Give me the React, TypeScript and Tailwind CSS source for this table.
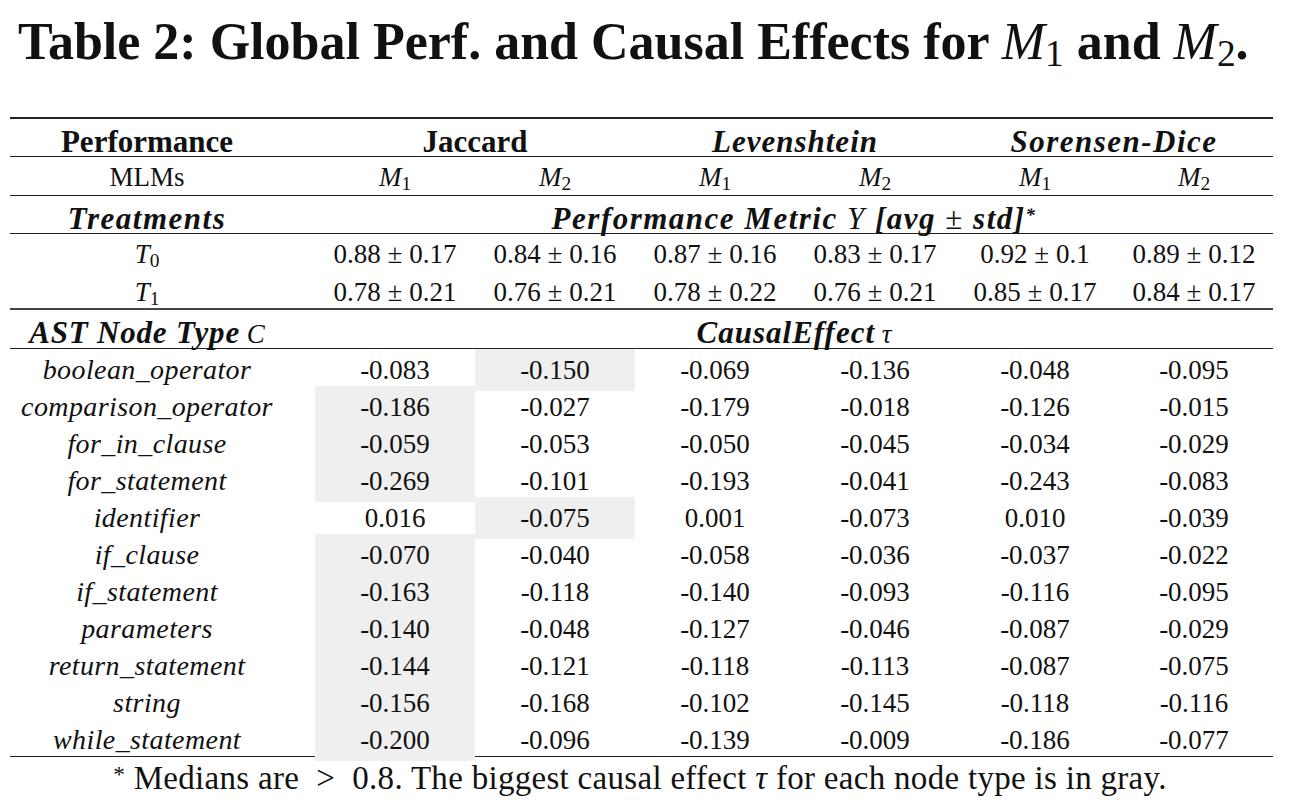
import type { ReactNode } from "react";

const serif = "font-['Liberation_Serif',serif]";

type DataRow = { name: string; values: string[]; gray: number[] };

const causalRows: DataRow[] = [
  { name: "boolean_operator", values: ["-0.083", "-0.150", "-0.069", "-0.136", "-0.048", "-0.095"], gray: [1] },
  { name: "comparison_operator", values: ["-0.186", "-0.027", "-0.179", "-0.018", "-0.126", "-0.015"], gray: [0] },
  { name: "for_in_clause", values: ["-0.059", "-0.053", "-0.050", "-0.045", "-0.034", "-0.029"], gray: [0] },
  { name: "for_statement", values: ["-0.269", "-0.101", "-0.193", "-0.041", "-0.243", "-0.083"], gray: [0] },
  { name: "identifier", values: ["0.016", "-0.075", "0.001", "-0.073", "0.010", "-0.039"], gray: [1] },
  { name: "if_clause", values: ["-0.070", "-0.040", "-0.058", "-0.036", "-0.037", "-0.022"], gray: [0] },
  { name: "if_statement", values: ["-0.163", "-0.118", "-0.140", "-0.093", "-0.116", "-0.095"], gray: [0] },
  { name: "parameters", values: ["-0.140", "-0.048", "-0.127", "-0.046", "-0.087", "-0.029"], gray: [0] },
  { name: "return_statement", values: ["-0.144", "-0.121", "-0.118", "-0.113", "-0.087", "-0.075"], gray: [0] },
  { name: "string", values: ["-0.156", "-0.168", "-0.102", "-0.145", "-0.118", "-0.116"], gray: [0] },
  { name: "while_statement", values: ["-0.200", "-0.096", "-0.139", "-0.009", "-0.186", "-0.077"], gray: [0] },
];

const perfRows = [
  { t: "0", values: ["0.88 ± 0.17", "0.84 ± 0.16", "0.87 ± 0.16", "0.83 ± 0.17", "0.92 ± 0.1", "0.89 ± 0.12"] },
  { t: "1", values: ["0.78 ± 0.21", "0.76 ± 0.21", "0.78 ± 0.22", "0.76 ± 0.21", "0.85 ± 0.17", "0.84 ± 0.17"] },
];

// italic letter with an upright subscript, kept close to the baseline
function Sub({ base, n }: { base: string; n: string }) {
  return (
    <span className="font-normal">
      <i>{base}</i>
      <span className="relative top-[0.2em] text-[0.72em] not-italic">{n}</span>
    </span>
  );
}

function Row({ children, className = "" }: { children: ReactNode; className?: string }) {
  return (
    <div className={`grid grid-cols-[305px_repeat(5,160px)_158px] items-stretch ${className}`}>
      {children}
    </div>
  );
}

function Label({ children }: { children: ReactNode }) {
  return <div className="flex items-center justify-center pr-[31px] whitespace-nowrap">{children}</div>;
}

function Cell({ children, gray = false }: { children: ReactNode; gray?: boolean }) {
  return (
    <div className={`flex items-center justify-center whitespace-nowrap ${gray ? "bg-[#efefef]" : ""}`}>
      {children}
    </div>
  );
}

export default function App() {
  return (
    <div className={`w-[1290px] h-[812px] bg-white text-[#111] ${serif}`}>
      <h1 className="pl-[18px] pt-[12px] text-[52px] leading-[60px] font-bold whitespace-nowrap">
        Table 2: Global Perf. and Causal Effects for <Sub base="M" n="1" /> and <Sub base="M" n="2" />.
      </h1>

      <div className="ml-[10px] mt-[40px] w-[1263px] border-t-2 border-[#222] text-[27px]">
        <Row className="h-[38px] border-b border-[#222] font-bold text-[31px]">
          <Label>Performance</Label>
          <div className="col-span-2 flex items-center justify-center">Jaccard</div>
          <div className="col-span-2 flex items-center justify-center italic tracking-[1px]">Levenshtein</div>
          <div className="col-span-2 flex items-center justify-center italic tracking-[1.5px]">Sorensen-Dice</div>
        </Row>
        <Row className="h-[39px] border-b border-[#222]">
          <Label>MLMs</Label>
          {["1", "2", "1", "2", "1", "2"].map((n, i) => (
            <Cell key={i}>
              <Sub base="M" n={n} />
            </Cell>
          ))}
        </Row>
        <Row className="h-[38px] border-b border-[#222]">
          <Label>
            <b className="italic text-[31px] tracking-[1.5px]">Treatments</b>
          </Label>
          <div className="col-span-6 flex items-center justify-center italic text-[31px] tracking-[1.5px]">
            <span className="whitespace-nowrap">
              <b>Performance Metric</b> <span className="font-normal">Y</span> <b>[avg</b>{" "}
              <span className="not-italic font-normal">±</span> <b>std]</b>
              <span className="relative -top-[0.45em] text-[0.6em] font-bold">*</span>
            </span>
          </div>
        </Row>
        {perfRows.map((r, idx) => (
          <Row key={r.t} className={idx === 0 ? "h-[38px]" : "h-[38px] border-b-2 border-[#444]"}>
            <Label>
              <Sub base="T" n={r.t} />
            </Label>
            {r.values.map((v, i) => (
              <Cell key={i}>{v}</Cell>
            ))}
          </Row>
        ))}
        <Row className="h-[39px] border-b border-[#222]">
          <Label>
            <span>
              <b className="italic text-[31px] tracking-[0.8px]">AST Node Type</b> <i>C</i>
            </span>
          </Label>
          <div className="col-span-6 flex items-center justify-center italic">
            <span>
              <b className="text-[31px] tracking-[1px]">CausalEffect</b> τ
            </span>
          </div>
        </Row>
        <div className="border-b border-[#222]">
          {causalRows.map((r) => (
            <Row key={r.name} className="h-[37px]">
              <Label>
                <i className="text-[28px] tracking-[0.4px]">{r.name}</i>
              </Label>
              {r.values.map((v, i) => (
                <Cell key={i} gray={r.gray.includes(i)}>
                  {v}
                </Cell>
              ))}
            </Row>
          ))}
        </div>
      </div>

      <p className="pt-[2px] pr-[10px] text-center text-[33px] leading-[38px] tracking-[0.3px] whitespace-nowrap">
        <span className="relative -top-[0.3em] text-[0.7em]">*</span> Medians are&nbsp;&nbsp;&gt;&nbsp;&nbsp;0.8. The biggest
        causal effect <i>τ</i> for each node type is in gray.
      </p>
    </div>
  );
}
